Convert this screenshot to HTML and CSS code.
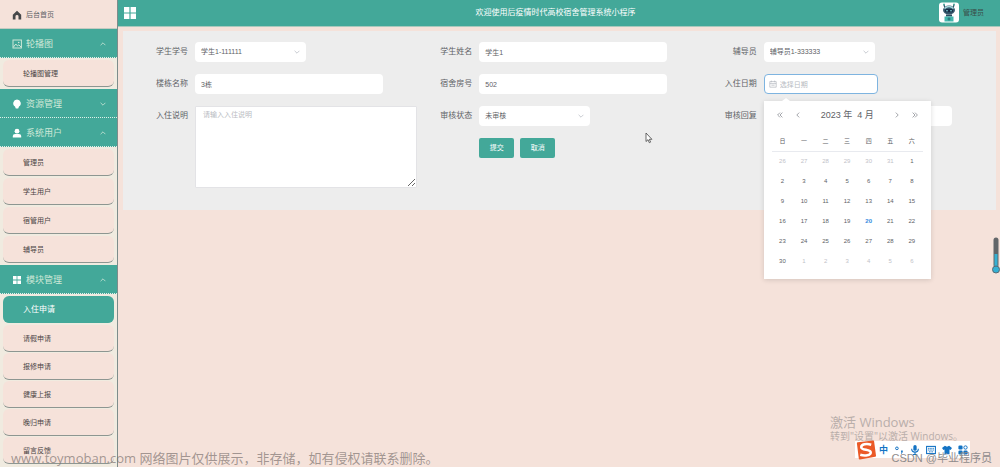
FILE: index.html
```html
<!DOCTYPE html>
<html lang="zh-CN">
<head>
<meta charset="utf-8">
<title>高校宿舍管理系统</title>
<link rel="stylesheet" href="styles.css">
</head>
<body>
<svg class="defs" aria-hidden="true">
  <symbol id="up" viewBox="0 0 10 10"><path d="M1 7l4-4 4 4" fill="none" stroke="currentColor" stroke-width="1.3"/></symbol>
  <symbol id="down" viewBox="0 0 10 10"><path d="M1 3l4 4 4-4" fill="none" stroke="currentColor" stroke-width="1.3"/></symbol>
  <symbol id="left" viewBox="0 0 10 10"><path d="M7 1L3 5l4 4" fill="none" stroke="currentColor" stroke-width="1.3"/></symbol>
  <symbol id="right" viewBox="0 0 10 10"><path d="M3 1l4 4-4 4" fill="none" stroke="currentColor" stroke-width="1.3"/></symbol>
  <symbol id="left2" viewBox="0 0 10 10"><path d="M5 1L1 5l4 4M9 1L5 5l4 4" fill="none" stroke="currentColor" stroke-width="1.3"/></symbol>
  <symbol id="right2" viewBox="0 0 10 10"><path d="M1 1l4 4-4 4M5 1l4 4-4 4" fill="none" stroke="currentColor" stroke-width="1.3"/></symbol>
  <symbol id="grid" viewBox="0 0 12 12"><path d="M0 0h5.400v5.400H0zM6.600 0H12v5.400H6.600zM0 6.600h5.400V12H0zM6.600 6.600H12V12H6.600z" fill="currentColor"/></symbol>
</svg>
<div class="app">
  <nav class="sidebar">
    <a class="home" href="#"><svg class="icon" viewBox="0 0 10 10"><path d="M5 .8L.8 4.800V9.400h2.700V6.200q0-1.200 1.500-1.200t1.500 1.200v3.200h2.700V4.800z" fill="#46484a"/></svg>后台首页</a>

    <button class="group"><svg class="icon" viewBox="0 0 10 10"><rect x="1" y="1" width="8.400" height="8" fill="none" stroke="currentColor"/><path d="M1.500 8l2.300-3 1.700 2 1.300-1.200L9 8" fill="none" stroke="currentColor"/><circle cx="6.700" cy="3.500" r=".8" fill="currentColor"/></svg>轮播图<svg class="caret"><use href="#up"/></svg></button>
    <div class="submenu"><a href="#">轮播图管理</a></div>

    <button class="group"><svg class="icon" viewBox="0 0 10 10"><path d="M5 .6a3.800 3.800 0 0 0-2 7l.8 1.800h2.400L7 7.600a3.800 3.800 0 0 0-2-7z" fill="#fff"/></svg>资源管理<svg class="caret"><use href="#down"/></svg></button>

    <button class="group"><svg class="icon" viewBox="0 0 10 10"><circle cx="5" cy="3.200" r="2.400" fill="#fff"/><path d="M.8 9.400V8q0-2 2.400-2h3.600q2.400 0 2.400 2v1.400z" fill="#fff"/></svg>系统用户<svg class="caret"><use href="#up"/></svg></button>
    <div class="submenu">
      <a href="#">管理员</a>
      <a href="#">学生用户</a>
      <a href="#">宿管用户</a>
      <a href="#">辅导员</a>
    </div>

    <button class="group"><svg class="icon white"><use href="#grid"/></svg>模块管理<svg class="caret"><use href="#up"/></svg></button>
    <div class="submenu modules">
      <a class="active" href="#">入住申请</a>
      <a href="#">请假申请</a>
      <a href="#">报修申请</a>
      <a href="#">健康上报</a>
      <a href="#">晚归申请</a>
      <a href="#">留言反馈</a>
    </div>
  </nav>

  <div class="content">
    <header class="topbar">
      <button class="toggle" aria-label="菜单"><svg><use href="#grid"/></svg></button>
      <h1>欢迎使用后疫情时代高校宿舍管理系统小程序</h1>
      <div class="user">
        <svg class="avatar" viewBox="0 0 20 20"><rect width="20" height="20" rx="3" fill="#fff"/><path d="M6 6L5 2M14 6l1-4" stroke="#2e5468" stroke-width="1.200"/><circle cx="5" cy="2" r=".9" fill="#43a999"/><circle cx="15" cy="2" r=".9" fill="#43a999"/><ellipse cx="10" cy="7.600" rx="6" ry="4.500" fill="#35576b"/><path d="M5.500 6q4.500-4 9 0" stroke="#a7d9dc" stroke-width="1.600" fill="none"/><rect x="6" y="6.600" width="8" height="3.200" rx="1.600" fill="#152b43"/><circle cx="8" cy="8.200" r=".8" fill="#8ce9ee"/><circle cx="12" cy="8.200" r=".8" fill="#8ce9ee"/><path d="M7 12h6v2H7z" fill="#284b5e"/><path d="M5.500 14h9v5h-9z" fill="#42b6ac"/><path d="M10 15v3M8.500 16.500h3" stroke="#226a70"/></svg>
        <span>管理员</span>
      </div>
    </header>

    <main class="card">
      <form class="form">
        <div class="field">
          <label for="sid">学生学号</label>
          <div class="select"><select id="sid"><option>学生1-111111</option></select><svg><use href="#down"/></svg></div>
        </div>
        <div class="field"><label for="sname">学生姓名</label><input id="sname" class="text" value="学生1"></div>
        <div class="field">
          <label for="tutor">辅导员</label>
          <div class="select"><select id="tutor"><option>辅导员1-333333</option></select><svg><use href="#down"/></svg></div>
        </div>

        <div class="field"><label for="building">楼栋名称</label><input id="building" class="text" value="3栋"></div>
        <div class="field"><label for="room">宿舍房号</label><input id="room" class="text" value="502"></div>
        <div class="field">
          <label for="date">入住日期</label>
          <div class="date">
            <svg class="cal-icon" viewBox="0 0 10 10"><path d="M1 2h8v7H1zM1 4.500h8M3 .8v2M7 .8v2M3 6.500h4" fill="none" stroke="#b4b8bf" stroke-width=".9"/></svg>
            <input id="date" class="text" placeholder="选择日期">
            <div class="picker">
              <div class="picker-head">
                <button type="button" aria-label="上一年"><svg><use href="#left2"/></svg></button>
                <button type="button" aria-label="上个月"><svg><use href="#left"/></svg></button>
                <span class="month"><span>2023 年</span><span>4 月</span></span>
                <button type="button" aria-label="下个月"><svg><use href="#right"/></svg></button>
                <button type="button" aria-label="下一年"><svg><use href="#right2"/></svg></button>
              </div>
              <table>
                <thead><tr><th>日</th><th>一</th><th>二</th><th>三</th><th>四</th><th>五</th><th>六</th></tr></thead>
                <tbody>
                  <tr><td class="off">26</td><td class="off">27</td><td class="off">28</td><td class="off">29</td><td class="off">30</td><td class="off">31</td><td>1</td></tr>
                  <tr><td>2</td><td>3</td><td>4</td><td>5</td><td>6</td><td>7</td><td>8</td></tr>
                  <tr><td>9</td><td>10</td><td>11</td><td>12</td><td>13</td><td>14</td><td>15</td></tr>
                  <tr><td>16</td><td>17</td><td>18</td><td>19</td><td class="today">20</td><td>21</td><td>22</td></tr>
                  <tr><td>23</td><td>24</td><td>25</td><td>26</td><td>27</td><td>28</td><td>29</td></tr>
                  <tr><td>30</td><td class="off">1</td><td class="off">2</td><td class="off">3</td><td class="off">4</td><td class="off">5</td><td class="off">6</td></tr>
                </tbody>
              </table>
            </div>
          </div>
        </div>

        <div class="field tall"><label for="note">入住说明</label><textarea id="note" placeholder="请输入入住说明"></textarea></div>
        <div class="field">
          <label for="state">审核状态</label>
          <div class="select"><select id="state"><option>未审核</option></select><svg><use href="#down"/></svg></div>
        </div>
        <div class="field"><label for="reply">审核回复</label><input id="reply" class="text"></div>
        <div class="actions"><button type="button">提交</button><button type="button">取消</button></div>
      </form>
    </main>
  </div>
</div>

<svg class="cursor" viewBox="0 0 8 12"><path d="M1 1v8.500l2-1.800 1.300 3 1.300-.6-1.300-2.800h2.600z" fill="#fff" stroke="#444" stroke-width=".8"/></svg>
<svg class="thermo" viewBox="0 0 8 37"><rect x="1.500" y=".5" width="5" height="30" rx="2.500" fill="#626669"/><path d="M2.500 17h3v15h-3z" fill="#35b0d3"/><circle cx="4" cy="32.500" r="3.500" fill="#35b0d3" stroke="#566a74"/></svg>

<div class="activate"><p class="activate-title">激活 Windows</p><p>转到"设置"以激活 Windows。</p></div>
<div class="ime">
  <svg class="sogou" viewBox="0 0 22 20"><path d="M3 3l16-2 2 15-16 3z" fill="#eb5a28" stroke="#eb5a28" stroke-width="2" stroke-linejoin="round"/><path d="M17 4.500C12 3 6.500 4 6.500 7c0 3.500 10 2 10 5.500 0 3-6 4-11 2.500" fill="none" stroke="#fff" stroke-width="2.600"/></svg>
  <span>中</span>
  <svg viewBox="0 0 12 12"><circle cx="3.500" cy="4" r="1.600" fill="none" stroke="#1473c4" stroke-width="1.200"/><path d="M8.500 6.500h2v2l-1.300 2h-.9l.7-2h-.5z" fill="#1473c4"/></svg>
  <svg viewBox="0 0 12 12"><rect x="4" y="0" width="4" height="7" rx="2" fill="#1473c4"/><path d="M2 4.500q0 4 4 4t4-4M6 8.500V11M3.500 11.300h5" fill="none" stroke="#1473c4" stroke-width="1.300"/></svg>
  <svg viewBox="0 0 12 12"><rect x=".7" y="1.700" width="10.600" height="8.600" fill="none" stroke="#1473c4" stroke-width="1.300"/><path d="M2.500 4h7M2.500 6h7M3.500 8.200h5" stroke="#1473c4" stroke-width="1.100" stroke-dasharray="1.400 .5"/></svg>
  <svg viewBox="0 0 12 12"><path d="M3.500 1q2.500 2 5 0L12 3.500 10.300 6 9 5.400V11H3V5.400L1.700 6 0 3.500z" fill="#1473c4"/></svg>
  <svg viewBox="0 0 12 12"><rect x=".5" y=".5" width="5" height="5" rx="1.500" fill="#1473c4"/><rect x=".5" y="6.500" width="5" height="5" rx="1.500" fill="#1473c4"/><rect x="6.500" y="6.500" width="5" height="5" rx="1.500" fill="#1473c4"/><circle cx="9" cy="3" r="2" fill="none" stroke="#1473c4" stroke-width="1.200"/></svg>
</div>
<p class="csdn">CSDN @毕业程序员</p>
<p class="watermark">www.toymoban.com 网络图片仅供展示，非存储，如有侵权请联系删除。</p>
</body>
</html>
```

FILE: styles.css
```css
* { box-sizing: border-box; }

body {
  margin: 0;
  background: #f5e2da;
  color: #606266;
  font: 8px/12px "Liberation Sans", "Noto Sans CJK SC", sans-serif;
}

p, h1 { margin: 0; font-weight: 400; }
button, input, select, textarea { font: inherit; color: inherit; margin: 0; border: 0; }
button { padding: 0; background: none; }
a { color: inherit; text-decoration: none; }
svg { display: block; }
.defs { position: absolute; width: 0; height: 0; }

.app { display: flex; height: 100vh; overflow: hidden; }

.sidebar {
  flex: 0 0 118px;
  background: #f0ebe0;
  border-right: 1px solid #7d8c8b;
  overflow: hidden;
}

.home {
  display: flex;
  align-items: center;
  gap: 4px;
  height: 29px;
  padding: 2px 12px 0;
  background: #f5e2da;
  border-bottom: 1px solid #c5cbc1;
  font-size: 7px;
}

.icon { width: 10px; height: 10px; }
.white { width: 8px; height: 8px; margin: 0 1px; color: #fff; }

.group {
  display: flex;
  align-items: center;
  gap: 4px;
  width: 100%;
  height: 29px;
  padding: 2px 11px 0 12px;
  background: #43a899;
  border-bottom: 1px dotted #dff0e8;
  color: #d0e8d8;
  font-size: 9px;
}

.caret { width: 6px; height: 6px; margin-left: auto; }

.submenu { display: grid; gap: 2px; padding: 2px 3px; }
.modules { gap: 1px; }

.submenu a {
  height: 27px;
  padding-left: 20px;
  border-bottom: 1px solid #8d9691;
  border-radius: 6px;
  background: #f6e2da;
  color: #4a4444;
  font-size: 7px;
  line-height: 28px;
}

.submenu .active {
  margin-bottom: 1px;
  background: #43a899;
  border-color: #43a899;
  color: #fff;
  font-size: 8px;
}

.content { flex: 1; min-width: 0; }

.topbar {
  display: flex;
  align-items: center;
  justify-content: space-between;
  height: 27px;
  padding: 0 16px 1px 6px;
  background: #43a899;
  border-bottom: 1px solid #a9c9bd;
  color: #fff;
}

.topbar h1 { font-size: 8px; margin-left: 36px; }
.toggle { color: #fff; }
.toggle svg { width: 12px; height: 12px; }
.user { display: flex; align-items: center; gap: 4px; color: #3a4c48; font-size: 7px; }
.avatar { width: 20px; height: 21px; }

.card {
  margin: 4px 4px 0 5px;
  padding: 11px 10px 22px;
  background: #ededed;
}

.form {
  display: grid;
  grid-template-columns: repeat(3, 1fr);
  grid-auto-rows: 20px;
  gap: 12px 0;
  padding-bottom: 30px;
}

.field { display: flex; gap: 7px; min-width: 0; }
.field label { flex: 0 0 55px; text-align: right; line-height: 20px; }
.tall { grid-row: 3 / span 2; height: 82px; }

.text, select, textarea {
  background: #fff;
  border-radius: 4px;
  font-size: 7px;
}

.text { width: 188px; height: 20px; padding: 0 6px; }

.select { position: relative; width: 111px; height: 20px; }
.select select { width: 100%; height: 100%; padding: 0 6px; appearance: none; }
.select svg { position: absolute; right: 6px; top: 7px; width: 6px; height: 6px; color: #b9bdc5; pointer-events: none; }

textarea { flex: 1; padding: 2px 7px; border: 1px solid #e3e3e6; border-radius: 1px; resize: vertical; }
::placeholder { color: #b8bbc2; opacity: 1; }

.date { position: relative; width: 114px; }
.date .text { width: 100%; padding-left: 15px; border: 1px solid #7eb4e0; }
.cal-icon { position: absolute; left: 5px; top: 6px; width: 8px; height: 8px; }

.picker {
  position: absolute;
  z-index: 2;
  top: 27px;
  left: 0;
  width: 167px;
  padding: 4px 8px 8px;
  background: #fff;
  box-shadow: 0 1px 5px rgba(0, 0, 0, .14);
}

.picker::before {
  content: "";
  position: absolute;
  top: -3px;
  left: 18px;
  border: 4px solid transparent;
  border-top: 0;
  border-bottom: 3px solid #fff;
}

.picker-head { display: flex; align-items: center; gap: 12px; height: 20px; padding: 0 5px; color: #8a8d93; }
.picker-head svg { width: 6px; height: 6px; }
.month { flex: 1; display: flex; justify-content: center; gap: 5px; font-size: 9px; white-space: nowrap; color: #606266; }

.picker table { width: 100%; margin-top: 6px; border-collapse: collapse; table-layout: fixed; font-size: 6px; line-height: 8px; }
.picker th, .picker td { height: 20px; padding: 0; text-align: center; font-weight: 400; }
.picker th { border-bottom: 1px solid #e8eaef; }
.picker .off { color: #bfc2c8; }
.picker .today { color: #348be0; font-weight: 700; }

.actions { grid-column: 2; display: flex; gap: 6px; padding-left: 62px; }
.actions button { width: 35px; height: 20px; border-radius: 2px; background: #43a899; color: #fff; font-size: 7px; }

.cursor { position: absolute; left: 645px; top: 132px; width: 8px; height: 12px; }
.thermo { position: absolute; right: 0; top: 237px; width: 8px; height: 37px; }

.activate { position: absolute; right: 46px; bottom: 24px; width: 124px; font: 10px/14px "Open Sans", "Noto Sans CJK SC", sans-serif; color: #b9aeaa; white-space: nowrap; }
.activate .activate-title { font-size: 13px; }

.ime { position: absolute; right: 30px; bottom: 9px; display: flex; align-items: center; gap: 6px; height: 17px; padding-right: 2px; background: #fff; color: #1473c4; font-size: 9px; font-weight: 700; }
.ime svg { width: 10px; height: 10px; }
.ime .sogou { width: 21px; height: 20px; margin-right: -3px; }

.csdn { position: absolute; right: 8px; bottom: 2px; font-size: 11px; line-height: 14px; color: #8f8b8c; }
.watermark { position: absolute; left: 11px; bottom: 0; font: 13px/18px "Open Sans", "Noto Sans CJK SC", sans-serif; color: rgba(125, 115, 112, .7); white-space: nowrap; }
```
